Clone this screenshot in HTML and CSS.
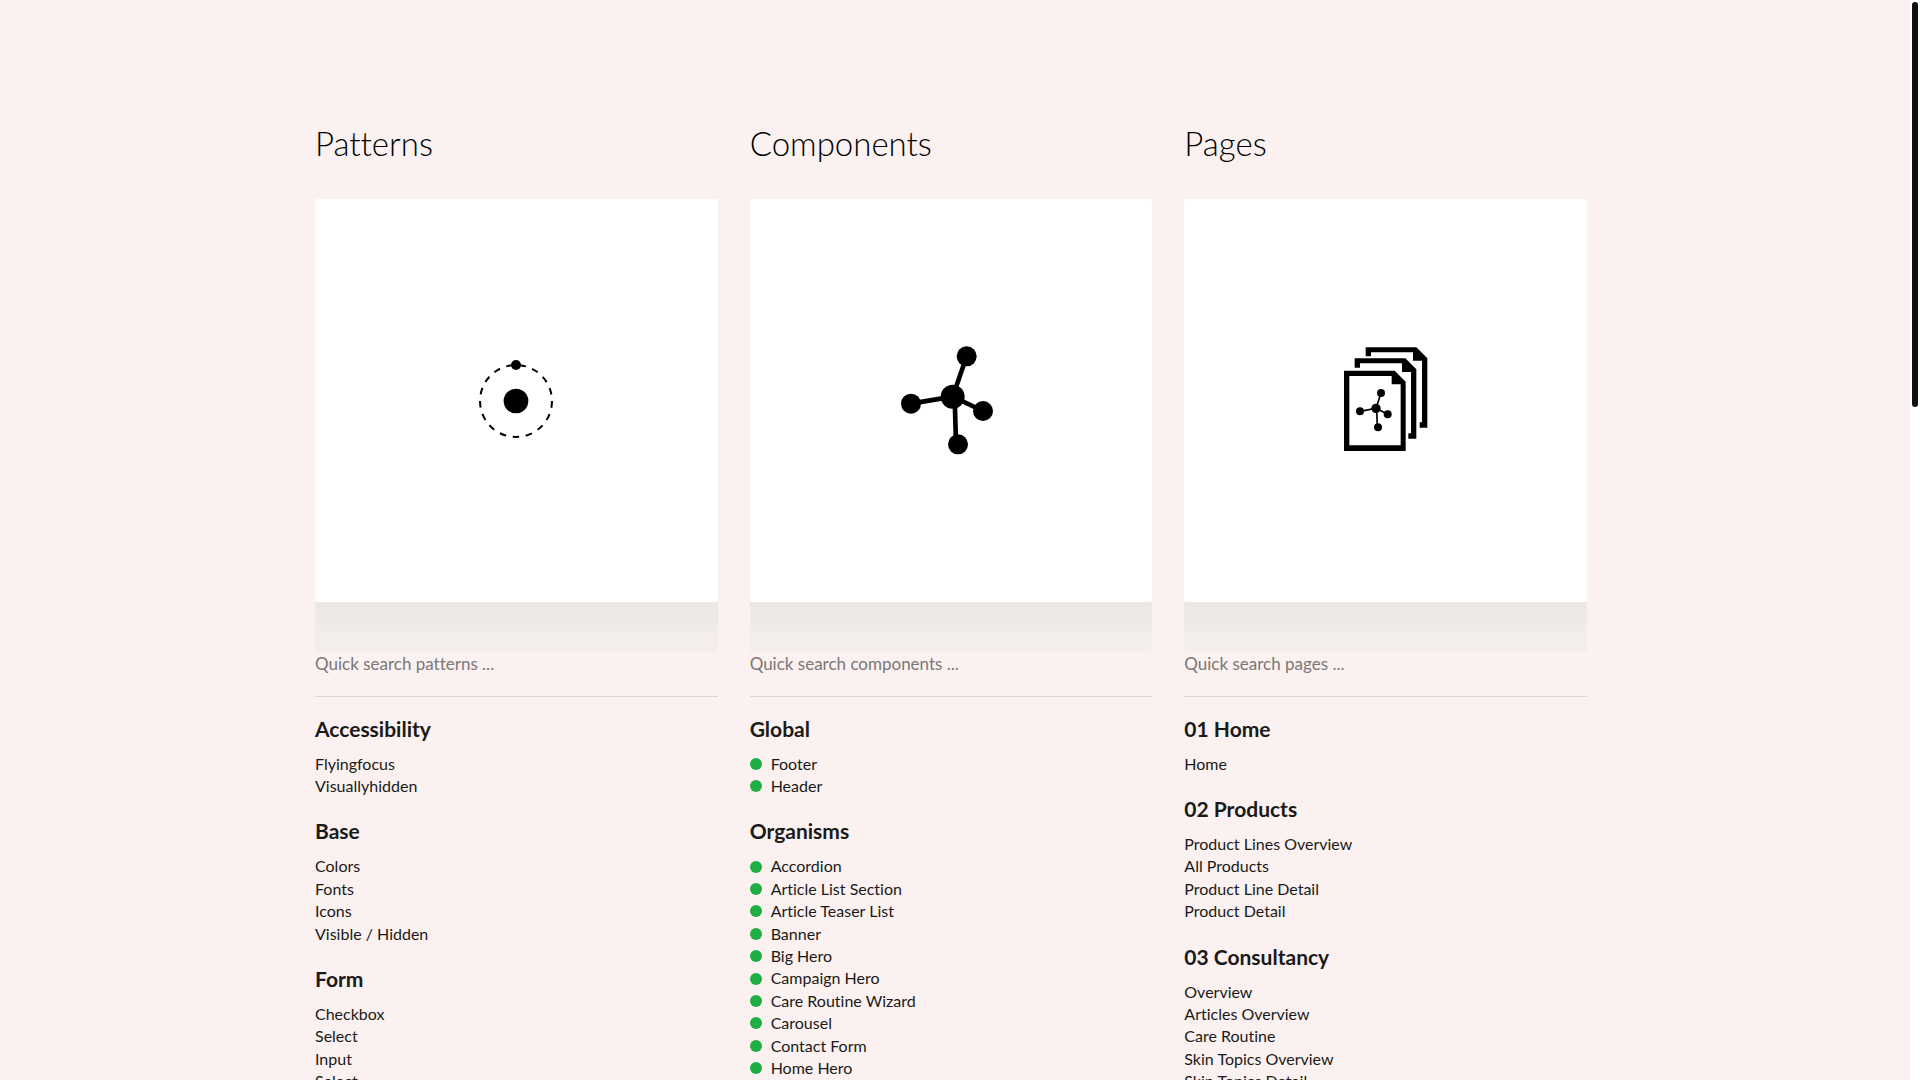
FILE: index.html
```html
<!DOCTYPE html>
<html lang="en">

<head>
    <meta charset="UTF-8">
    <meta name="viewport" content="width=device-width, initial-scale=1.0">
    <title>Styleguide</title>
    <link rel="stylesheet" href="styles.css">
</head>

<body>
    <main class="overview">
        <section class="column">
            <h1 class="column-title">Patterns</h1>
            <a class="card" href="#patterns" aria-label="Patterns">
                <svg class="card-icon" viewBox="-12 0 360 360">
                    <circle cx="168" cy="183" r="37" />
                    <circle cx="168" cy="75" r="15" />
                    <circle cx="168" cy="183" r="108" fill="none" stroke="#000" stroke-width="6" pathLength="340" stroke-dasharray="10 10" stroke-dashoffset="5" transform="rotate(90 168 183)" />
                </svg>
            </a>
            <input class="search" type="search" placeholder="Quick search patterns ..." aria-label="Quick search patterns">
            <h2 class="group-title">Accessibility</h2>
            <ul class="group">
                <li><a href="#">Flyingfocus</a></li>
                <li><a href="#">Visuallyhidden</a></li>
            </ul>
            <h2 class="group-title">Base</h2>
            <ul class="group">
                <li><a href="#">Colors</a></li>
                <li><a href="#">Fonts</a></li>
                <li><a href="#">Icons</a></li>
                <li><a href="#">Visible / Hidden</a></li>
            </ul>
            <h2 class="group-title">Form</h2>
            <ul class="group">
                <li><a href="#">Checkbox</a></li>
                <li><a href="#">Select</a></li>
                <li><a href="#">Input</a></li>
                <li><a href="#">Select</a></li>
            </ul>
        </section>

        <section class="column">
            <h1 class="column-title">Components</h1>
            <a class="card" href="#components" aria-label="Components">
                <svg class="card-icon" viewBox="3 15 360 360">
                    <path d="M230 64 188 185 63 206M188 185 279 228M194 185 198 328" fill="none" stroke="#000" stroke-width="14" />
                    <circle cx="188" cy="185" r="36" />
                    <circle cx="230" cy="64" r="30" />
                    <circle cx="63" cy="206" r="30" />
                    <circle cx="279" cy="228" r="30" />
                    <circle cx="204" cy="328" r="30" />
                </svg>
            </a>
            <input class="search" type="search" placeholder="Quick search components ..." aria-label="Quick search components">
            <h2 class="group-title">Global</h2>
            <ul class="group group-status">
                <li><a href="#">Footer</a></li>
                <li><a href="#">Header</a></li>
            </ul>
            <h2 class="group-title">Organisms</h2>
            <ul class="group group-status">
                <li><a href="#">Accordion</a></li>
                <li><a href="#">Article List Section</a></li>
                <li><a href="#">Article Teaser List</a></li>
                <li><a href="#">Banner</a></li>
                <li><a href="#">Big Hero</a></li>
                <li><a href="#">Campaign Hero</a></li>
                <li><a href="#">Care Routine Wizard</a></li>
                <li><a href="#">Carousel</a></li>
                <li><a href="#">Contact Form</a></li>
                <li><a href="#">Home Hero</a></li>
            </ul>
        </section>

        <section class="column">
            <h1 class="column-title">Pages</h1>
            <a class="card" href="#pages" aria-label="Pages">
                <svg class="card-icon" viewBox="-12 15 360 360">
                    <path d="M107 37H259L292 70V278H269V262H276V77H249V52H123V64H107Z" />
                    <path d="M74 70H226L259 103V311H235V295H243V111H216V85H90V98H74Z" />
                    <path fill-rule="evenodd" d="M42 107H194L227 140V348H42ZM58 123V331H212V148H185V123Z" />
                    <path d="M153 174 138 220 90 229M138 220 173 238M140 220 142 277" fill="none" stroke="#000" stroke-width="5" />
                    <circle cx="138" cy="220" r="14" />
                    <circle cx="153" cy="174" r="12" />
                    <circle cx="90" cy="229" r="12" />
                    <circle cx="173" cy="238" r="12" />
                    <circle cx="144" cy="277" r="12" />
                </svg>
            </a>
            <input class="search" type="search" placeholder="Quick search pages ..." aria-label="Quick search pages">
            <h2 class="group-title">01 Home</h2>
            <ul class="group">
                <li><a href="#">Home</a></li>
            </ul>
            <h2 class="group-title">02 Products</h2>
            <ul class="group">
                <li><a href="#">Product Lines Overview</a></li>
                <li><a href="#">All Products</a></li>
                <li><a href="#">Product Line Detail</a></li>
                <li><a href="#">Product Detail</a></li>
            </ul>
            <h2 class="group-title">03 Consultancy</h2>
            <ul class="group">
                <li><a href="#">Overview</a></li>
                <li><a href="#">Articles Overview</a></li>
                <li><a href="#">Care Routine</a></li>
                <li><a href="#">Skin Topics Overview</a></li>
                <li><a href="#">Skin Topics Detail</a></li>
            </ul>
        </section>
    </main>
    <div class="scrollbar"></div>
</body>

</html>
```
FILE: styles.css
```css
* {
    box-sizing: border-box;
    margin: 0;
    padding: 0;
}

html {
    height: 100%;
    overflow: hidden;
}

body {
    height: 100%;
    overflow: hidden;
    padding-right: 18px;
    background: #faf1f0;
    color: #1a1a18;
    font-family: Lato, sans-serif;
    font-size: 16px;
    line-height: 1.4;
    font-variant-ligatures: none;
}

.overview {
    display: grid;
    grid-template-columns: repeat(3, 1fr);
    gap: 32px;
    max-width: 1272px;
    margin: 0 auto;
    padding-top: 119px;
}

.column-title {
    margin-bottom: 32px;
    color: #000;
    font-size: 33px;
    font-weight: 300;
    line-height: 48px;
}

/* card */
.card {
    display: flex;
    align-items: center;
    justify-content: center;
    aspect-ratio: 1;
    border-radius: 2px;
    background: #fff;
    box-shadow: 0 10px 0 #ece8e4, 0 20px 0 #edeae6, 0 30px 0 #efebe8, 0 50px 0 #f3eeeb;
}

.card-icon {
    width: 120px;
    height: 120px;
}

/* search */
.search {
    display: block;
    position: relative;
    width: 100%;
    height: 66px;
    margin: 29px 0 18px;
    border: 0;
    border-bottom: 1px solid #dcd7d5;
    border-radius: 0;
    outline: 0;
    background: transparent;
    color: inherit;
    font: inherit;
    font-size: 17px;
    -webkit-appearance: none;
    appearance: none;
}

.search::placeholder {
    color: #7b7876;
}

/* lists */
.group-title {
    margin-bottom: 10px;
    font-size: 21px;
    font-weight: 700;
    line-height: 28px;
}

.group {
    margin-bottom: 20px;
    list-style: none;
}

.group a {
    color: inherit;
    text-decoration: none;
}

.group-status li {
    display: flex;
    align-items: center;
    gap: 9px;
}

.group-status li::before {
    content: "";
    width: 12px;
    height: 12px;
    border-radius: 50%;
    background: #20ae44;
}

/* scrollbar */
.scrollbar {
    position: fixed;
    top: 0;
    right: 0;
    bottom: 0;
    width: 10px;
    padding: 2px;
    background: #fff;
}

.scrollbar::before {
    content: "";
    display: block;
    height: 405px;
    border-radius: 3px;
    background: #111;
}
```
